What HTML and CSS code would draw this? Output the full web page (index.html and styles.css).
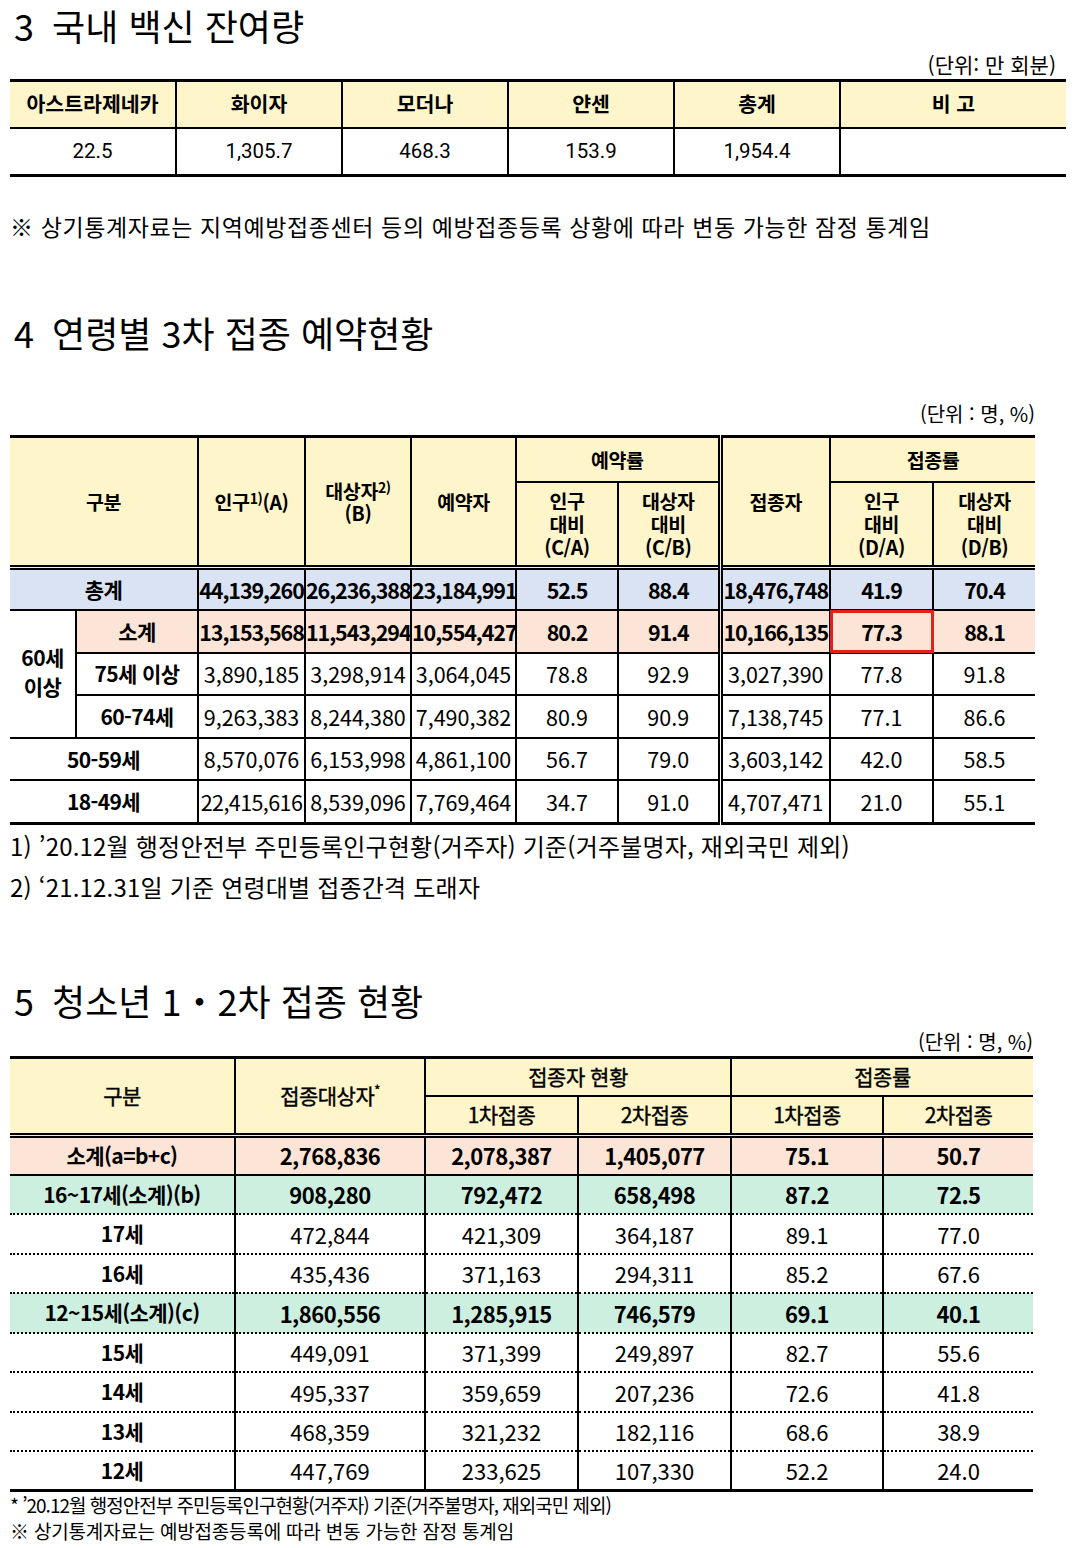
FILE: index.html
```html
<!DOCTYPE html>
<html lang="ko">
<head>
<meta charset="utf-8">
<title>백신 현황</title>
<link rel="stylesheet" href="styles.css">
</head>
<body>
<main class="page">

<section class="sec sec3">
  <h2 class="title"><span class="num">3</span> 국내 백신 잔여량</h2>
  <p class="unit unit-a">(단위: 만 회분)</p>
  <table class="t1">
    <colgroup>
      <col class="w166"><col class="w166"><col class="w166"><col class="w166"><col class="w166"><col class="w226">
    </colgroup>
    <thead>
      <tr><th>아스트라제네카</th><th>화이자</th><th>모더나</th><th>얀센</th><th>총계</th><th>비 고</th></tr>
    </thead>
    <tbody>
      <tr><td>22.5</td><td>1,305.7</td><td>468.3</td><td>153.9</td><td>1,954.4</td><td></td></tr>
    </tbody>
  </table>
  <p class="note">※ 상기통계자료는 지역예방접종센터 등의 예방접종등록 상황에 따라 변동 가능한 잠정 통계임</p>
</section>

<section class="sec sec4">
  <h2 class="title title4"><span class="num">4</span> 연령별 3차 접종 예약현황</h2>
  <p class="unit unit-b">(단위 : 명, %)</p>
  <table class="t2">
    <colgroup>
      <col class="w66"><col class="w122"><col class="w107"><col class="w106"><col class="w105"><col class="w102"><col class="w102"><col class="w110"><col class="w103"><col class="w102">
    </colgroup>
    <thead>
      <tr class="h1">
        <th class="l" colspan="2" rowspan="2">구분</th>
        <th rowspan="2">인구<sup class="sp">1)</sup>(A)</th>
        <th rowspan="2" class="two">대상자<sup class="sp">2)</sup><br>(B)</th>
        <th rowspan="2">예약자</th>
        <th colspan="2">예약률</th>
        <th rowspan="2" class="dbl">접종자</th>
        <th colspan="2">접종률</th>
      </tr>
      <tr class="h2">
        <th>인구<br>대비<br>(C/A)</th>
        <th>대상자<br>대비<br>(C/B)</th>
        <th>인구<br>대비<br>(D/A)</th>
        <th>대상자<br>대비<br>(D/B)</th>
      </tr>
    </thead>
    <tbody>
      <tr class="blue b">
        <th class="l" colspan="2">총계</th>
        <td>44,139,260</td><td>26,236,388</td><td>23,184,991</td><td>52.5</td><td>88.4</td><td class="dbl">18,476,748</td><td>41.9</td><td>70.4</td>
      </tr>
      <tr class="peach b">
        <th class="l age60" rowspan="3">60세<br>이상</th>
        <th>소계</th>
        <td>13,153,568</td><td>11,543,294</td><td>10,554,427</td><td>80.2</td><td>91.4</td><td class="dbl">10,166,135</td><td class="hl">77.3</td><td>88.1</td>
      </tr>
      <tr class="dot">
        <th>75세 이상</th>
        <td>3,890,185</td><td>3,298,914</td><td>3,064,045</td><td>78.8</td><td>92.9</td><td class="dbl">3,027,390</td><td>77.8</td><td>91.8</td>
      </tr>
      <tr>
        <th>60-74세</th>
        <td>9,263,383</td><td>8,244,380</td><td>7,490,382</td><td>80.9</td><td>90.9</td><td class="dbl">7,138,745</td><td>77.1</td><td>86.6</td>
      </tr>
      <tr>
        <th class="l" colspan="2">50-59세</th>
        <td>8,570,076</td><td>6,153,998</td><td>4,861,100</td><td>56.7</td><td>79.0</td><td class="dbl">3,603,142</td><td>42.0</td><td>58.5</td>
      </tr>
      <tr>
        <th class="l" colspan="2">18-49세</th>
        <td class="tight">22,415,616</td><td>8,539,096</td><td>7,769,464</td><td>34.7</td><td>91.0</td><td class="dbl">4,707,471</td><td>21.0</td><td>55.1</td>
      </tr>
    </tbody>
  </table>
  <p class="fn">1) ’20.12월 행정안전부 주민등록인구현황(거주자) 기준(거주불명자, 재외국민 제외)</p>
  <p class="fn">2) ‘21.12.31일 기준 연령대별 접종간격 도래자</p>
</section>

<section class="sec sec5">
  <h2 class="title title5"><span class="num">5</span> 청소년 1・2차 접종 현황</h2>
  <p class="unit unit-c">(단위 : 명, %)</p>
  <table class="t3">
    <colgroup>
      <col class="w225"><col class="w190"><col class="w153"><col class="w153"><col class="w152"><col class="w150">
    </colgroup>
    <thead>
      <tr>
        <th class="l" rowspan="2">구분</th>
        <th rowspan="2">접종대상자<sup class="ast">*</sup></th>
        <th colspan="2">접종자 현황</th>
        <th colspan="2">접종률</th>
      </tr>
      <tr>
        <th>1차접종</th><th>2차접종</th><th>1차접종</th><th>2차접종</th>
      </tr>
    </thead>
    <tbody>
      <tr class="peach b solidb">
        <th class="l">소계(a=b+c)</th><td>2,768,836</td><td>2,078,387</td><td>1,405,077</td><td>75.1</td><td>50.7</td>
      </tr>
      <tr class="green b">
        <th class="l">16~17세(소계)(b)</th><td>908,280</td><td>792,472</td><td>658,498</td><td>87.2</td><td>72.5</td>
      </tr>
      <tr>
        <th class="l">17세</th><td>472,844</td><td>421,309</td><td>364,187</td><td>89.1</td><td>77.0</td>
      </tr>
      <tr>
        <th class="l">16세</th><td>435,436</td><td>371,163</td><td>294,311</td><td>85.2</td><td>67.6</td>
      </tr>
      <tr class="green b">
        <th class="l">12~15세(소계)(c)</th><td>1,860,556</td><td>1,285,915</td><td>746,579</td><td>69.1</td><td>40.1</td>
      </tr>
      <tr>
        <th class="l">15세</th><td>449,091</td><td>371,399</td><td>249,897</td><td>82.7</td><td>55.6</td>
      </tr>
      <tr>
        <th class="l">14세</th><td>495,337</td><td>359,659</td><td>207,236</td><td>72.6</td><td>41.8</td>
      </tr>
      <tr>
        <th class="l">13세</th><td>468,359</td><td>321,232</td><td>182,116</td><td>68.6</td><td>38.9</td>
      </tr>
      <tr>
        <th class="l">12세</th><td>447,769</td><td>233,625</td><td>107,330</td><td>52.2</td><td>24.0</td>
      </tr>
    </tbody>
  </table>
  <p class="sfn sfn1">* ’20.12월 행정안전부 주민등록인구현황(거주자) 기준(거주불명자, 재외국민 제외)</p>
  <p class="sfn sfn2">※ 상기통계자료는 예방접종등록에 따라 변동 가능한 잠정 통계임</p>
</section>

</main>
</body>
</html>
```

FILE: styles.css
```css
* { box-sizing: border-box; }
html, body { margin: 0; padding: 0; background: #fff; }
body {
  font-family: "Noto Sans CJK KR", "Noto Sans", sans-serif;
  color: #000;
  width: 1080px;
}
.page { padding: 0 0 0 10px; }

.title {
  margin: 0;
  padding-left: 4px;
  font-weight: 400;
  font-size: 36px;
  line-height: 50px;
  height: 50px;
  white-space: nowrap;
}
.title .num { margin-right: 8px; }
.title4 { margin-top: 66px; }
.title5 { margin-top: 68px; }

.unit {
  margin: 0;
  text-align: right;
  font-size: 20px;
  line-height: 28px;
}
.unit-a { width: 1046px; font-size: 21px; }
.unit-b { width: 1025px; margin-top: 43px; }
.unit-c { width: 1023px; margin-top: 3px; }

table { border-collapse: collapse; table-layout: fixed; }

.w66 { width: 66px; } .w102 { width: 102px; } .w103 { width: 103px; }
.w105 { width: 105px; } .w106 { width: 106px; } .w107 { width: 107px; }
.w110 { width: 110px; } .w122 { width: 122px; } .w150 { width: 150px; }
.w152 { width: 152px; } .w153 { width: 153px; } .w166 { width: 166px; }
.w190 { width: 190px; } .w225 { width: 225px; } .w226 { width: 226px; }

/* table 1 */
.t1 {
  width: 1056px;
  margin-top: 1px;
  border-top: 3px solid #000;
  border-bottom: 3px solid #000;
}
.t1 th, .t1 td {
  padding: 0;
  text-align: center;
  border-left: 2px solid #000;
  border-right: 2px solid #000;
}
.t1 tr > :first-child { border-left: none; }
.t1 tr > :last-child { border-right: none; }
.t1 th {
  height: 47px;
  padding-bottom: 3px;
  background: #fef5cb;
  font-size: 20.5px;
  font-weight: 700;
  border-bottom: 2px solid #000;
}
.t1 td {
  height: 48px;
  font-family: Roboto, "Noto Sans CJK KR", sans-serif;
  font-size: 20.5px;
}

.note {
  margin: 34px 0 0;
  font-size: 23px;
  line-height: 30px;
  letter-spacing: 0.6px;
}

/* table 2 */
.t2 {
  width: 1025px;
  margin-top: 7px;
  border-top: 3px solid #000;
  border-bottom: 3px solid #000;
}
.t2 th, .t2 td {
  padding: 0;
  text-align: center;
  border: 2px solid #000;
  font-size: 21.5px;
  line-height: 1.1;
  white-space: nowrap;
}
.t2 .l { border-left: none; }
.t2 tr > :last-child { border-right: none; }
.t2 thead th {
  background: #fef5cb;
  font-weight: 700;
  font-size: 19.5px;
  line-height: 23px;
  letter-spacing: -0.4px;
}
.t2 .h1 th { height: 45px; }
.t2 .h2 th { height: 86px; }
.t2 .two { line-height: 22px; }
.t2 .sp { font-size: 14px; line-height: 0; vertical-align: 6px; }
.t2 tbody tr:first-child > * { border-top: 5px double #000; }
.t2 .dbl { border-left: 5px double #000; }
.t2 tbody th, .t2 tbody td { height: 42.6px; }
.t2 tbody th { font-weight: 700; font-size: 21px; letter-spacing: -0.6px; }
.t2 tbody .age60 { line-height: 29px; padding-bottom: 4px; }
.t2 tbody td { font-weight: 400; }
.t2 .b td { font-size: 21.5px; font-weight: 700; letter-spacing: -1.1px; }
.t2 .tight { letter-spacing: -0.6px; }
.t2 .blue > * { background: #dae3f3; }
.t2 .peach > * { background: #fce4d6; }
.t2 .peach > .age60 { background: #fff; }
.t2 .dot > * { border-bottom: 2px dotted #000; }
.t2 .hl { position: relative; }
.t2 .hl::after {
  content: "";
  position: absolute;
  left: -1px; top: -1px; right: -2px; bottom: -1px;
  border: 3px solid #e3201b;
}

.fn {
  margin: 0;
  font-size: 24px;
  line-height: 41px;
  letter-spacing: 0.2px;
}

/* table 3 */
.t3 {
  width: 1023px;
  border-top: 3px solid #000;
  border-bottom: 3px solid #000;
}
.t3 th, .t3 td {
  padding: 0;
  text-align: center;
  border: 2px solid #000;
  border-top: 2px dotted #000;
  border-bottom: 2px dotted #000;
  font-size: 22px;
  line-height: 1.1;
  white-space: nowrap;
}
.t3 .l { border-left: none; }
.t3 tr > :last-child { border-right: none; }
.t3 thead th {
  background: #fef5cb;
  font-weight: 400;
  -webkit-text-stroke: 0.4px #000;
  font-size: 21px;
  letter-spacing: -0.5px;
  height: 39px;
  border-top: 2px solid #000;
  border-bottom: 2px solid #000;
}
.t3 .ast { font-size: 13px; line-height: 0; vertical-align: 9px; }
.t3 tbody tr:first-child > * { border-top: 5px double #000; }
.t3 .solidb > * { border-bottom: 2px solid #000; }
.t3 tbody th, .t3 tbody td { height: 39.5px; }
.t3 tbody th { font-weight: 700; font-size: 21px; letter-spacing: -0.6px; }
.t3 .b td { font-weight: 700; letter-spacing: -0.5px; }
.t3 .peach > * { background: #fce4d6; }
.t3 .green > * { background: #ccefe0; }

.sfn {
  margin: 0;
  font-size: 19px;
  line-height: 26px;
}
.sfn1 { letter-spacing: -1px; }
.sfn2 { letter-spacing: -0.2px; }
```
